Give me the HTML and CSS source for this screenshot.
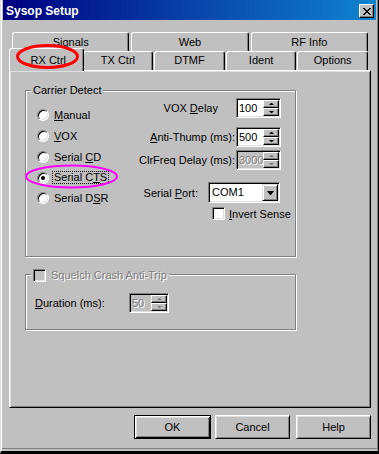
FILE: index.html
```html
<!DOCTYPE html>
<html lang="en">
<head>
    <meta charset="UTF-8">
    <meta name="viewport" content="width=device-width, initial-scale=1.0">
    <title>Sysop Setup</title>
    <link rel="stylesheet" href="styles.css">
</head>
<body>
    <div class="window">
        <div class="titlebar">
            <span class="title">Sysop Setup</span>
            <span class="close-btn">
                <svg width="8" height="7" viewBox="0 0 8 7" shape-rendering="crispEdges">
                    <rect x="0" y="0" width="2" height="1"/><rect x="6" y="0" width="2" height="1"/>
                    <rect x="1" y="1" width="2" height="1"/><rect x="5" y="1" width="2" height="1"/>
                    <rect x="2" y="2" width="4" height="1"/>
                    <rect x="3" y="3" width="2" height="1"/>
                    <rect x="2" y="4" width="4" height="1"/>
                    <rect x="1" y="5" width="2" height="1"/><rect x="5" y="5" width="2" height="1"/>
                    <rect x="0" y="6" width="2" height="1"/><rect x="6" y="6" width="2" height="1"/>
                </svg>
            </span>
        </div>

        <div class="tabs">
            <div class="tab-row back">
                <div class="tab">Signals</div>
                <div class="tab">Web</div>
                <div class="tab">RF Info</div>
            </div>
            <div class="tab-row front">
                <div class="tab active">RX Ctrl</div>
                <div class="tab">TX Ctrl</div>
                <div class="tab">DTMF</div>
                <div class="tab">Ident</div>
                <div class="tab">Options</div>
            </div>

            <div class="panel">
                <!-- Carrier Detect -->
                <div class="group carrier">
                    <span class="legend">Carrier Detect</span>
                    <div class="radios">
                        <div class="radio-row"><span class="radio"></span><span><u>M</u>anual</span></div>
                        <div class="radio-row"><span class="radio"></span><span><u>V</u>OX</span></div>
                        <div class="radio-row"><span class="radio"></span><span>Serial <u>C</u>D</span></div>
                        <div class="radio-row"><span class="radio on"></span><span class="focus">Serial C<u>T</u>S</span></div>
                        <div class="radio-row"><span class="radio"></span><span>Serial D<u>S</u>R</span></div>
                    </div>
                    <div class="fields">
                        <div class="field-row vox">
                            <label>VOX <u>D</u>elay</label>
                            <div class="spin"><span class="spin-val">100</span><span class="spin-btns"><span class="sb up"></span><span class="sb down"></span></span></div>
                        </div>
                        <div class="field-row anti">
                            <label><u>A</u>nti-Thump (ms):</label>
                            <div class="spin"><span class="spin-val">500</span><span class="spin-btns"><span class="sb up"></span><span class="sb down"></span></span></div>
                        </div>
                        <div class="field-row clr">
                            <label>ClrFreq Delay (ms):</label>
                            <div class="spin disabled"><span class="spin-val">3000</span><span class="spin-btns"><span class="sb up"></span><span class="sb down"></span></span></div>
                        </div>
                        <div class="field-row port">
                            <label>Serial <u>P</u>ort:</label>
                            <div class="combo"><span class="combo-val">COM1</span><span class="combo-btn"></span></div>
                        </div>
                        <div class="check-row"><span class="check"></span><span><u>I</u>nvert Sense</span></div>
                    </div>
                </div>

                <!-- Squelch Crash -->
                <div class="group squelch">
                    <div class="legend legend-check"><span class="check disabled"></span><span class="dis">Squelch Crash Anti-Trip</span></div>
                    <div class="duration-row">
                        <label><u>D</u>uration (ms):</label>
                        <div class="spin disabled narrow"><span class="spin-val">50</span><span class="spin-btns"><span class="sb up"></span><span class="sb down"></span></span></div>
                    </div>
                </div>
            </div>
        </div>

        <div class="buttons">
            <button class="btn default">OK</button>
            <button class="btn cancel">Cancel</button>
            <button class="btn help">Help</button>
        </div>

        <!-- marcas a mano sobre la captura -->
        <svg class="annot" width="379" height="454">
            <ellipse cx="47.5" cy="56.5" rx="30" ry="11" fill="none" stroke="#ff0000" stroke-width="3"/>
            <ellipse cx="71.5" cy="176.5" rx="45.5" ry="11" fill="none" stroke="#ff00ff" stroke-width="2"/>
        </svg>
    </div>
</body>
</html>
```

FILE: styles.css
```css
body {
    margin: 0;
    background-color: #c0c0c0;
    font-family: 'Liberation Sans', Arial, sans-serif;
    font-size: 11px;
    color: #000;
}
.window {
    position: relative;
    width: 379px;
    height: 454px;
    box-sizing: border-box;
    background-color: #c0c0c0;
    border-left: 1px solid #dfdfdf;
    border-right: 1px solid #000;
    border-bottom: 3px solid #000;
    box-shadow: inset 1px 0 #fff, inset -1px 0 #808080, inset 0 -2px #c0c0c0, inset 0 -3px #808080;
}
.titlebar {
    display: flex;
    justify-content: space-between;
    align-items: flex-start;
    height: 20px;
    margin: 0 2px;
    background: linear-gradient(90deg, #000080, #1084d0);
}
.title {
    margin: 4px 0 0 3px;
    line-height: 14px;
    font-size: 12px;
    font-weight: bold;
    color: #fff;
}
.close-btn {
    display: flex;
    align-items: center;
    justify-content: center;
    width: 15px;
    height: 14px;
    margin: 4px 2px 0 0;
    box-sizing: border-box;
    background-color: #c0c0c0;
    border: 1px solid;
    border-color: #fff #000 #000 #fff;
    box-shadow: inset -1px -1px #808080;
}
/* Pestañas */
.tabs {
    width: 362px;
    margin: 12px 0 0 8px;
}
.tab-row {
    display: flex;
    height: 19px;
}
.tab-row.back {
    padding: 0 3px;
    gap: 2px;
}
.tab-row.front {
    padding: 0 3px 0 2px;
    gap: 1px;
}
.tab {
    flex: 1 1 0;
    min-width: 0;
    text-align: center;
    line-height: 18px;
    white-space: nowrap;
    background-color: #c0c0c0;
    border-top: 1px solid #fff;
    border-left: 1px solid #fff;
    border-right: 1px solid #000;
    border-radius: 3px 3px 0 0;
    box-shadow: inset -1px 0 #808080;
}
.front .tab {
    line-height: 16px;
}
.tab.active {
    position: relative;
    z-index: 1;
    margin: -3px -2px -1px;
    padding: 3px 0 1px 4px;
}
.panel {
    height: 338px;
    box-sizing: border-box;
    padding: 19px 0 0 15px;
    border: 1px solid;
    border-color: #fff #000 #000 #fff;
    box-shadow: inset 1px 1px #dfdfdf, inset -1px -1px #808080;
}
/* Grupos */
.group {
    position: relative;
    width: 271px;
    box-sizing: border-box;
    border: 1px solid #808080;
    box-shadow: 1px 1px 0 #fff, inset 1px 1px 0 #fff;
}
.carrier {
    height: 167px;
    display: flex;
    align-items: flex-start;
}
.squelch {
    height: 56px;
    margin-top: 17px;
}
.legend {
    position: absolute;
    top: -7px;
    left: 5px;
    padding: 0 2px;
    line-height: 13px;
    background-color: #c0c0c0;
    white-space: nowrap;
}
.legend-check {
    top: -6px;
    display: flex;
    align-items: center;
    gap: 5px;
}
.radios {
    width: 103px;
    flex-shrink: 0;
    margin: 14px 0 0 11px;
    display: flex;
    flex-direction: column;
}
.radio-row {
    display: flex;
    align-items: center;
    gap: 5px;
    height: 20.75px;
    white-space: nowrap;
}
.radio {
    flex-shrink: 0;
    width: 12px;
    height: 12px;
    box-sizing: border-box;
    border-radius: 50%;
    border: 1px solid;
    border-color: #808080 #fff #fff #808080;
    box-shadow: inset 1px 1px #000, inset -1px -1px #dfdfdf;
    background-color: #fff;
    display: flex;
    align-items: center;
    justify-content: center;
}
.radio.on::after {
    content: "";
    width: 4px;
    height: 4px;
    border-radius: 50%;
    background-color: #000;
}
.focus {
    margin-left: -2px;
    padding: 0 1px;
    line-height: 11px;
    border: 1px dotted #000;
}
.fields {
    flex: 1;
    min-width: 0;
    margin-top: 7px;
    padding-right: 14px;
    display: flex;
    flex-direction: column;
}
.field-row {
    display: flex;
    justify-content: flex-end;
    align-items: center;
    white-space: nowrap;
}
.field-row label {
    flex-shrink: 0;
    margin-right: 1px;
}
.vox label {
    margin-right: 18px;
}
.anti {
    margin-top: 9px;
}
.clr {
    margin-top: 3px;
}
.port {
    margin-top: 12px;
    padding-right: 1px;
}
.port label {
    margin-right: 10px;
}
.check-row {
    display: flex;
    align-items: center;
    gap: 4px;
    margin: 4px 0 0 72px;
    white-space: nowrap;
}
.check {
    flex-shrink: 0;
    width: 13px;
    height: 13px;
    box-sizing: border-box;
    border: 1px solid;
    border-color: #808080 #fff #fff #808080;
    box-shadow: inset 1px 1px #000, inset -1px -1px #dfdfdf;
    background-color: #fff;
}
.check.disabled {
    background-color: #c0c0c0;
}
.dis {
    color: #808080;
    text-shadow: 1px 1px 0 #fff;
}
/* Campos numéricos */
.spin, .combo {
    flex-shrink: 0;
    display: flex;
    box-sizing: border-box;
    padding: 1px;
    background-color: #fff;
    border: 1px solid;
    border-color: #808080 #fff #fff #808080;
    box-shadow: inset 1px 1px #000, inset -1px -1px #dfdfdf;
}
.spin {
    width: 45px;
    height: 20px;
}
.spin.narrow {
    width: 40px;
}
.spin-val {
    flex: 1;
    padding-left: 1px;
    line-height: 16px;
}
.spin.disabled {
    background-color: #c0c0c0;
}
.spin.disabled .spin-val {
    color: #808080;
    text-shadow: 1px 1px 0 #fff;
}
.spin-btns {
    width: 16px;
    display: flex;
    flex-direction: column;
}
.sb {
    flex: 1;
    display: flex;
    align-items: center;
    justify-content: center;
    box-sizing: border-box;
    background-color: #c0c0c0;
    border: 1px solid;
    border-color: #fff #000 #000 #fff;
    box-shadow: inset -1px -1px #808080;
}
.sb::after {
    content: "";
    width: 1px;
    border-left: 2px solid transparent;
    border-right: 2px solid transparent;
}
.sb.up::after {
    border-bottom: 2px solid #000;
}
.sb.down::after {
    border-top: 2px solid #000;
}
.spin.disabled .sb.up::after {
    border-bottom-color: #808080;
}
.spin.disabled .sb.down::after {
    border-top-color: #808080;
}
.combo {
    width: 72px;
    height: 21px;
}
.combo-val {
    flex: 1;
    padding-left: 2px;
    line-height: 17px;
}
.combo-btn {
    width: 16px;
    display: flex;
    align-items: center;
    justify-content: center;
    box-sizing: border-box;
    background-color: #c0c0c0;
    border: 1px solid;
    border-color: #dfdfdf #000 #000 #dfdfdf;
    box-shadow: inset 1px 1px #fff, inset -1px -1px #808080;
}
.combo-btn::after {
    content: "";
    width: 1px;
    border-top: 4px solid #000;
    border-left: 3px solid transparent;
    border-right: 3px solid transparent;
}
.duration-row {
    display: flex;
    align-items: center;
    margin: 18px 0 0 9px;
}
.duration-row label {
    width: 94px;
}
/* Botones */
.buttons {
    display: flex;
    justify-content: flex-end;
    width: 362px;
    margin: 7px 0 0 8px;
}
.btn {
    width: 75px;
    height: 24px;
    box-sizing: border-box;
    padding: 0;
    font: inherit;
    color: #000;
    background-color: #c0c0c0;
    border: 1px solid;
    border-color: #fff #000 #000 #fff;
    box-shadow: inset 1px 1px #dfdfdf, inset -1px -1px #808080;
}
.btn.default {
    width: 77px;
    border-color: #000;
    box-shadow: inset 1px 1px #fff, inset -1px -1px #000, inset 2px 2px #dfdfdf, inset -2px -2px #808080;
}
.btn.cancel {
    margin-left: 4px;
}
.btn.help {
    margin-left: 6px;
}
.annot {
    position: absolute;
    z-index: 2;
    left: -1px;
    top: 0;
    pointer-events: none;
}
```
